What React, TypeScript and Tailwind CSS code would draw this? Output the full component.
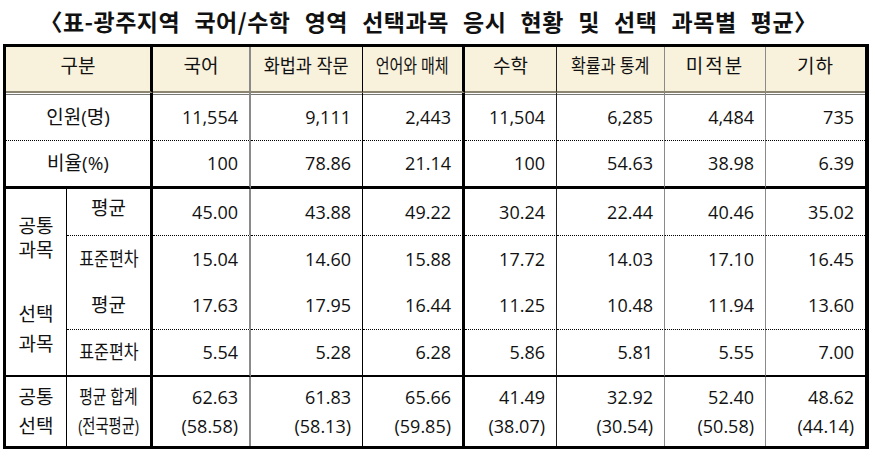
const cols = 'grid-cols-[61px_86px_98px_112px_102px_92px_108px_101px_99px]'

// 열별 오른쪽 선
const rb = [
  'border-r border-r-black',
  'border-r-[3px] border-r-black',
  'border-r-2 border-r-[#8a8a8a]',
  'border-r border-r-black',
  'border-r-[3px] border-r-black',
  'border-r border-r-[#222]',
  'border-r border-r-[#8a8a8a]',
  'border-r border-r-[#8a8a8a]',
  '',
]

const dotted = 'border-b border-b-black [border-bottom-style:dotted]!'
const firstRow = 'shadow-[inset_0_1px_0_#fff,inset_0_2px_0_#777]'

const heads = [
  { t: '국어', c: '' },
  { t: '화법과 작문', c: 'scale-x-[0.92]' },
  { t: '언어와 매체', c: 'scale-x-[0.79]' },
  { t: '수학', c: '' },
  { t: '확률과 통계', c: 'scale-x-[0.85]' },
  { t: '미적분', c: 'tracking-[2px]' },
  { t: '기하', c: 'tracking-[1px]' },
]

const people = ['11,554', '9,111', '2,443', '11,504', '6,285', '4,484', '735']
const ratio = ['100', '78.86', '21.14', '100', '54.63', '38.98', '6.39']
const comAvg = ['45.00', '43.88', '49.22', '30.24', '22.44', '40.46', '35.02']
const comSd = ['15.04', '14.60', '15.88', '17.72', '14.03', '17.10', '16.45']
const selAvg = ['17.63', '17.95', '16.44', '11.25', '10.48', '11.94', '13.60']
const selSd = ['5.54', '5.28', '6.28', '5.86', '5.81', '5.55', '7.00']
const total = [
  ['62.63', '(58.58)'],
  ['61.83', '(58.13)'],
  ['65.66', '(59.85)'],
  ['41.49', '(38.07)'],
  ['32.92', '(30.54)'],
  ['52.40', '(50.58)'],
  ['48.62', '(44.14)'],
]

function Nums({ vals, row }: { vals: string[]; row: string }) {
  return (
    <>
      {vals.map((v, i) => (
        <div key={i} className={`flex items-center justify-end pr-[11px] ${rb[i + 2]} ${row}`}>
          {v}
        </div>
      ))}
    </>
  )
}

export default function App() {
  return (
    <div className="w-[875px] h-[466px] bg-white text-[#111] font-['Open_Sans','Noto_Sans_CJK_KR',sans-serif] overflow-hidden">
      {/* 제목 */}
      <div className="h-[44px] flex items-center justify-center pb-[2px] pr-[18px]">
        <h1 className="text-[23px] font-bold tracking-[0.5px] [word-spacing:8.5px] font-['Noto_Sans_CJK_KR',sans-serif] whitespace-nowrap">
          〈표-광주지역 국어/수학 영역 선택과목 응시 현황 및 선택 과목별 평균〉
        </h1>
      </div>

      {/* 표 */}
      <div
        className={`ml-[3px] w-[866px] grid ${cols} grid-rows-[46px_48px_48px_47px_46px_48px_47px_69px] border-t-[3px] border-l-[3px] border-b-[3px] border-r-[4px] border-black text-[18px]`}
      >
        {/* 머리글 */}
        <div className={`col-span-2 flex items-center justify-center pb-[5px] text-[19px] bg-[#f8f1dc] border-b-2 border-b-[#8b8571] ${rb[1]}`}>
          구분
        </div>
        {heads.map((h, i) => (
          <div
            key={h.t}
            className={`flex items-center justify-center pb-[5px] text-[19px] bg-[#f8f1dc] border-b-2 border-b-[#8b8571] ${rb[i + 2]}`}
          >
            <span className={`inline-block whitespace-nowrap ${h.c}`}>{h.t}</span>
          </div>
        ))}

        {/* 인원 */}
        <div className={`col-span-2 flex items-center justify-center pt-[1px] text-[19px] ${rb[1]} ${dotted} ${firstRow}`}>
          인원(명)
        </div>
        <Nums vals={people} row={`pt-[2px] ${dotted} ${firstRow}`} />

        {/* 비율 */}
        <div className={`col-span-2 flex items-center justify-center text-[19px] border-b-[3px] border-b-black ${rb[1]}`}>
          비율(%)
        </div>
        <Nums vals={ratio} row="border-b-[3px] border-b-black" />

        {/* 공통과목 */}
        <div className={`row-span-2 flex flex-col items-center justify-center text-[19px] leading-[24px] pt-[4px] ${rb[0]}`}>
          <span>공통</span>
          <span>과목</span>
        </div>
        <div className={`flex items-center justify-center pb-[8px] text-[19px] ${rb[1]} ${dotted}`}>평균</div>
        <Nums vals={comAvg} row={dotted} />
        <div className={`flex items-center justify-center text-[19px] ${rb[1]}`}>
          <span className="inline-block whitespace-nowrap scale-x-[0.85]">표준편차</span>
        </div>
        <Nums vals={comSd} row="" />

        {/* 선택과목 */}
        <div className={`row-span-2 flex flex-col items-center justify-center text-[19px] leading-[30px] border-b-2 border-b-black ${rb[0]}`}>
          <span>선택</span>
          <span>과목</span>
        </div>
        <div className={`flex items-center justify-center text-[19px] ${rb[1]} ${dotted}`}>평균</div>
        <Nums vals={selAvg} row={dotted} />
        <div className={`flex items-center justify-center text-[19px] border-b-2 border-b-black ${rb[1]}`}>
          <span className="inline-block whitespace-nowrap scale-x-[0.85]">표준편차</span>
        </div>
        <Nums vals={selSd} row="border-b-2 border-b-black" />

        {/* 합계 */}
        <div className={`flex flex-col items-center justify-center text-[19px] leading-[29px] ${rb[0]}`}>
          <span>공통</span>
          <span>선택</span>
        </div>
        <div className={`flex flex-col items-center justify-center text-[19px] leading-[29px] ${rb[1]}`}>
          <span className="inline-block whitespace-nowrap scale-x-[0.78]">평균 합계</span>
          <span className="inline-block whitespace-nowrap scale-x-[0.75]">(전국평균)</span>
        </div>
        {total.map((v, i) => (
          <div key={i} className={`flex flex-col items-end justify-center pr-[11px] leading-[29px] ${rb[i + 2]}`}>
            <span>{v[0]}</span>
            <span>{v[1]}</span>
          </div>
        ))}
      </div>
    </div>
  )
}
